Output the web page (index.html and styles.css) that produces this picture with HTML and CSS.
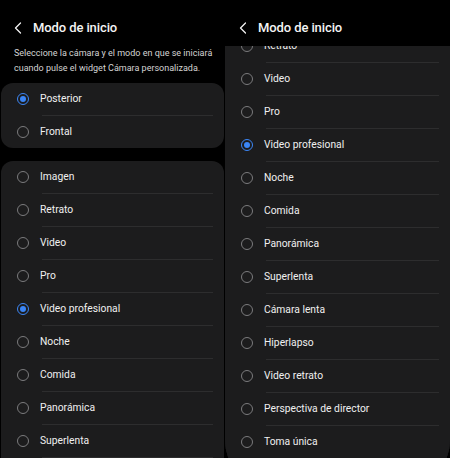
FILE: index.html
```html
<!DOCTYPE html>
<html lang="es">
<head>
<meta charset="utf-8">
<title>Modo de inicio</title>
<link rel="stylesheet" href="styles.css">
</head>
<body>
<div class="screens">
  <section class="panel panel-left">
    <header class="topbar">
      <svg class="back" width="8" height="12" viewBox="0 0 8 12"><polyline points="6.5,1 1.5,6 6.5,11" fill="none" stroke="#f2f2f2" stroke-width="1.3" stroke-linecap="round" stroke-linejoin="round"/></svg>
      <h1 class="title">Modo de inicio</h1>
    </header>
    <p class="desc">Seleccione la cámara y el modo en que se iniciará cuando pulse el widget Cámara personalizada.</p>
    <div class="card card-first">
      <div class="row"><span class="radio on"></span><span class="label">Posterior</span></div>
      <div class="sep"></div>
      <div class="row"><span class="radio"></span><span class="label">Frontal</span></div>
    </div>
    <div class="card card-second">
      <div class="row"><span class="radio"></span><span class="label">Imagen</span></div>
      <div class="sep"></div>
      <div class="row"><span class="radio"></span><span class="label">Retrato</span></div>
      <div class="sep"></div>
      <div class="row"><span class="radio"></span><span class="label">Video</span></div>
      <div class="sep"></div>
      <div class="row"><span class="radio"></span><span class="label">Pro</span></div>
      <div class="sep"></div>
      <div class="row"><span class="radio on"></span><span class="label">Video profesional</span></div>
      <div class="sep"></div>
      <div class="row"><span class="radio"></span><span class="label">Noche</span></div>
      <div class="sep"></div>
      <div class="row"><span class="radio"></span><span class="label">Comida</span></div>
      <div class="sep"></div>
      <div class="row"><span class="radio"></span><span class="label">Panorámica</span></div>
      <div class="sep"></div>
      <div class="row"><span class="radio"></span><span class="label">Superlenta</span></div>
      <div class="sep"></div>
    </div>
  </section>
  <section class="panel panel-right">
    <header class="topbar">
      <svg class="back" width="8" height="12" viewBox="0 0 8 12"><polyline points="6.5,1 1.5,6 6.5,11" fill="none" stroke="#f2f2f2" stroke-width="1.3" stroke-linecap="round" stroke-linejoin="round"/></svg>
      <h1 class="title">Modo de inicio</h1>
    </header>
    <div class="viewport">
      <div class="card card-scrolled">
        <div class="row"><span class="radio"></span><span class="label">Retrato</span></div>
        <div class="sep"></div>
        <div class="row"><span class="radio"></span><span class="label">Video</span></div>
        <div class="sep"></div>
        <div class="row"><span class="radio"></span><span class="label">Pro</span></div>
        <div class="sep"></div>
        <div class="row"><span class="radio on"></span><span class="label">Video profesional</span></div>
        <div class="sep"></div>
        <div class="row"><span class="radio"></span><span class="label">Noche</span></div>
        <div class="sep"></div>
        <div class="row"><span class="radio"></span><span class="label">Comida</span></div>
        <div class="sep"></div>
        <div class="row"><span class="radio"></span><span class="label">Panorámica</span></div>
        <div class="sep"></div>
        <div class="row"><span class="radio"></span><span class="label">Superlenta</span></div>
        <div class="sep"></div>
        <div class="row"><span class="radio"></span><span class="label">Cámara lenta</span></div>
        <div class="sep"></div>
        <div class="row"><span class="radio"></span><span class="label">Hiperlapso</span></div>
        <div class="sep"></div>
        <div class="row"><span class="radio"></span><span class="label">Video retrato</span></div>
        <div class="sep"></div>
        <div class="row"><span class="radio"></span><span class="label">Perspectiva de director</span></div>
        <div class="sep"></div>
        <div class="row"><span class="radio"></span><span class="label">Toma única</span></div>
      </div>
    </div>
  </section>
</div>
</body>
</html>
```

FILE: styles.css
```css
* { box-sizing: border-box; }

html, body {
  margin: 0;
  padding: 0;
  background: #000;
  width: 450px;
  height: 458px;
  overflow: hidden;
  font-family: Roboto, "Noto Sans", "Liberation Sans", sans-serif;
  color: #f2f2f2;
}

.screens {
  display: grid;
  grid-template-columns: 225px 225px;
  height: 458px;
  overflow: hidden;
}

.panel {
  display: flex;
  flex-direction: column;
  background: #000;
  overflow: hidden;
}

.panel-left {
  height: 458px;
}

.panel-right {
  height: 490px;
  border-bottom-left-radius: 50px;
  border-bottom-right-radius: 50px;
  background: #1c1c1d;
}

.topbar {
  flex: none;
  height: 46px;
  padding: 0 0 0 14px;
  display: flex;
  align-items: flex-start;
  background: #000;
  position: relative;
  z-index: 1;
}

.back {
  margin-top: 22px;
  display: block;
}

.title {
  margin: 0 0 0 11px;
  padding-top: 19px;
  font-size: 13px;
  line-height: 18px;
  font-weight: 500;
  letter-spacing: -0.1px;
  color: #f4f4f4;
}

.desc {
  margin: 0;
  padding: 0 6px 0 14px;
  font-size: 9px;
  line-height: 15px;
  color: #d4d4d4;
}

.card {
  background: #1c1c1d;
  margin: 0 1px;
  border-radius: 12px;
}

.card-first {
  margin-top: 7px;
}

.card-second {
  margin-top: 13px;
  border-bottom-left-radius: 0;
  border-bottom-right-radius: 0;
  flex: 1;
}

.viewport {
  flex: 1;
  overflow: hidden;
  background: #1c1c1d;
}

.card-scrolled {
  margin: -16px 0 0 0;
  border-radius: 0;
}

.row {
  height: 32px;
  display: flex;
  align-items: center;
  padding-left: 16px;
}

.sep {
  height: 1px;
  margin: 0 11px 0 41px;
  background: #2d2d2e;
}

.radio {
  flex: none;
  width: 12px;
  height: 12px;
  border-radius: 50%;
  border: 1.3px solid #7b7b7d;
  display: flex;
  align-items: center;
  justify-content: center;
}

.radio.on {
  border: 1.6px solid #3b86f6;
}

.radio.on::after {
  content: "";
  width: 6px;
  height: 6px;
  border-radius: 50%;
  background: #3b86f6;
}

.label {
  margin-left: 11px;
  font-size: 10.3px;
  line-height: 14px;
  color: #f0f0f0;
}
```
